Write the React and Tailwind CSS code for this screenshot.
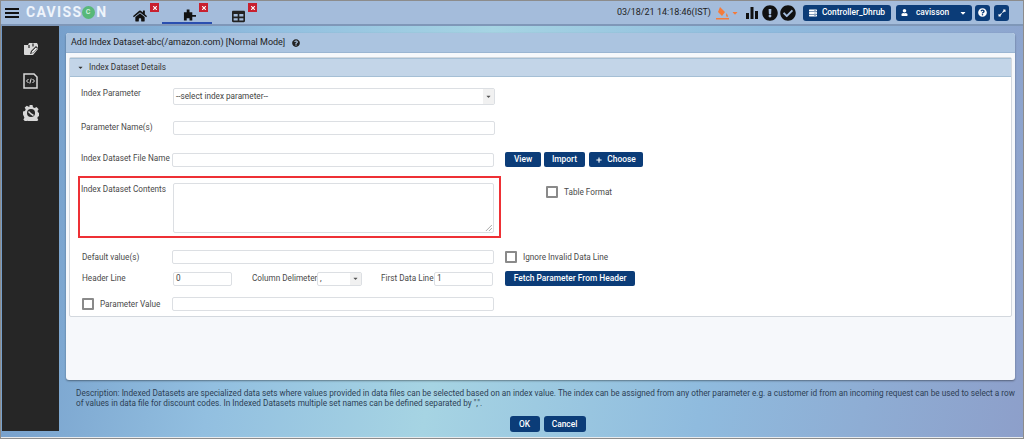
import React from "react";
import { FaHome, FaTable, FaQuestionCircle, FaExpandAlt, FaUser, FaServer, FaExclamationCircle, FaCheckCircle, FaCaretDown, FaPlus, FaTimes } from "react-icons/fa";

function Close({ className }) {
  return (
    <span className={"absolute w-[9px] h-[9px] bg-[#c8202f] flex items-center justify-center " + className}>
      <FaTimes className="text-white text-[6px]" />
    </span>
  );
}

function NavBtn({ children, className = "" }) {
  return (
    <button className={"h-[15px] rounded-[2px] bg-[#0b3c78] text-white text-[8.4px] font-medium flex items-center justify-center whitespace-nowrap " + className}>
      {children}
    </button>
  );
}

function Field({ className = "", children }) {
  return (
    <div className={"h-[14px] bg-white border border-[#dcdfe3] rounded-[2px] text-[8.2px] text-[#444] flex items-center px-[2px] " + className}>
      {children}
    </div>
  );
}

function Check({ className = "" }) {
  return <span className={"block w-[12px] h-[12px] border-2 border-[#8a8a8a] rounded-[1px] bg-white " + className} />;
}

function Label({ children, className = "" }) {
  return <span className={"text-[8.2px] text-[#4a4a4a] whitespace-nowrap " + className}>{children}</span>;
}

function Caret() {
  return (
    <span className="w-[11px] self-stretch bg-[#f1f1f1] flex items-center justify-center ml-auto -mr-[2px]">
      <FaCaretDown className="text-[#555] text-[7px]" />
    </span>
  );
}

export default function App() {
  return (
    <div className="w-[1024px] h-[439px] overflow-hidden flex flex-col bg-[#e8eaec] border-t border-x border-b border-[#8c8c8c] font-['Roboto',sans-serif] pb-[1px]">
      <header className="h-[25px] shrink-0 flex items-center bg-[#a4bcdb] border-b-2 border-[#7f97b8]">
        <div className="w-[14px] ml-[4px] flex flex-col gap-[2px]">
          <span className="h-[2px] bg-[#111]" />
          <span className="h-[2px] bg-[#111]" />
          <span className="h-[2px] bg-[#111]" />
        </div>
        <span className="ml-[7px] w-[84px] text-[14px] font-bold tracking-[1.3px] text-[#eef4fb] flex items-center">
          CAVISS
          <span className="w-[13px] h-[13px] rounded-full bg-[#58b878] flex items-center justify-center text-[7px] text-[#cfeedd]">C</span>
          <span className="ml-[1px]">N</span>
        </span>
        <div className="relative w-[50px] h-full ml-[2px] flex items-center pl-[21px]">
          <FaHome className="text-[#111] text-[14px] mt-[7px]" />
          <Close className="top-[2px] left-[38px]" />
        </div>
        <div className="relative w-[50px] h-full flex items-center justify-center border-b-2 border-[#2a4fb0] pl-[4px]">
          <svg viewBox="0 0 14 12" className="w-[13px] h-[12px] mt-[6px]" fill="#111">
            <path d="M4 0h3v3H4zM1 3h9v3h4v2h-4v4H7V9.500H4V12H1z" />
          </svg>
          <Close className="top-[2px] left-[37px]" />
        </div>
        <div className="relative w-[50px] h-full flex items-center justify-center pl-[3px]">
          <FaTable className="text-[#222] text-[13px] mt-[7px]" />
          <Close className="top-[2px] left-[36px]" />
        </div>
        <div className="ml-auto flex items-center">
          <span className="text-[9px] text-[#222] whitespace-nowrap">03/18/21 14:18:46(IST)</span>
          <svg viewBox="0 0 14 14" className="w-[14px] h-[14px] ml-[5px]">
            <path d="M4 1l5 5-3 4-4-4zM10.500 7c1 2 2 3 1 4-1 0-2-1-1-4z" fill="#f47b3a" />
            <path d="M0 12h13v1.500H0z" fill="#f47b3a" />
          </svg>
          <FaCaretDown className="text-[#f47b3a] text-[8px] ml-[1px]" />
          <svg viewBox="0 0 12 12" className="w-[12px] h-[12px] ml-[7px]" fill="#111">
            <path d="M0 6h3v6H0zM4.500 0h3v12h-3zM9 4h3v8H9z" />
          </svg>
          <FaExclamationCircle className="text-[#111] text-[16px] ml-[4px]" />
          <FaCheckCircle className="text-[#111] text-[16px] ml-[2px]" />
          <NavBtn className="w-[88px] h-[16px] ml-[7px] gap-[5px] rounded-[3px]">
            <FaServer className="text-[8px]" />
            Controller_Dhrub
          </NavBtn>
          <NavBtn className="w-[76px] h-[16px] ml-[5px] rounded-[3px] justify-start px-[5px]">
            <FaUser className="text-[7px]" />
            <span className="ml-[8px]">cavisson</span>
            <FaCaretDown className="text-[8px] ml-auto" />
          </NavBtn>
          <NavBtn className="w-[15px] h-[16px] ml-[3px] rounded-[3px]"><FaQuestionCircle className="text-[9px]" /></NavBtn>
          <NavBtn className="w-[15px] h-[16px] ml-[4px] mr-[14px] rounded-[3px]"><FaExpandAlt className="text-[8px]" /></NavBtn>
        </div>
      </header>
      <div className="flex-1 min-h-0 flex bg-[linear-gradient(100deg,#6f97c6_0%,#92bfe0_25%,#a6d4e3_45%,#8fbbde_70%,#8d9fca_100%)]">
        <aside className="w-[57px] h-[405px] ml-[1px] shrink-0 bg-[#262626] flex flex-col items-center pt-[16px] gap-[16px]">
          <svg viewBox="0 0 16 15" className="w-[16px] h-[15px]">
            <path d="M1 3h4l1-2h8l1 2v4l-5 6H2a1 1 0 0 1-1-1z" fill="#d8d8d8" />
            <path d="M6 3v3M10 1.500v3" stroke="#262626" strokeWidth="1.200" />
            <path d="M7 12l1-3 5-5 2 2-5 5z" fill="#262626" />
            <path d="M8.500 11l.5-1.500 4-4 1 1-4 4z" fill="#fff" />
          </svg>
          <svg viewBox="0 0 15 16" className="w-[15px] h-[16px]">
            <path d="M1 1h10l3 3v11H1z" fill="#262626" stroke="#d8d8d8" strokeWidth="1.500" />
            <path d="M5.500 6L3.500 8l2 2M9.500 6l2 2-2 2M8.200 5.500L6.800 10.500" fill="none" stroke="#e8e8e8" strokeWidth="1" />
          </svg>
          <svg viewBox="0 0 16 16" className="w-[16px] h-[16px]">
            <path d="M6.500 0h3l.5 2.200 1.500.7L13.600 2l2 2.200-1.100 1.800.6 1.500 1.900.5v3l-2 .5-.7 1.500 1 1.900-2.100 2-1.900-1-1.500.6-.5 1.500h-3l-.5-1.700-1.500-.6-1.900 1-2-2.100 1-1.800-.6-1.500L0 9.500v-3l2-.6.700-1.500L1.700 2.600 3.800.7l1.900 1.100 1-.4z" fill="#d8d8d8" />
            <circle cx="8" cy="8" r="4" fill="#262626" />
            <path d="M5.500 6.500l2.500 2.500 2.500 1.500" fill="none" stroke="#d8d8d8" strokeWidth="1.500" />
          </svg>
        </aside>
        <main className="flex-1 min-w-0 pl-[7px] pr-[8px] pt-[7px] flex flex-col">
          <section className="h-[347px] shrink-0 rounded-[3px] bg-[#f6f8fb] shadow-[0_1px_2px_rgba(0,0,0,0.4)] flex flex-col">
            <div className="h-[20px] rounded-t-[3px] bg-[#abc4e0] border-b border-[#9ab5d2] flex items-center pl-[5px] text-[9px] text-[#222]">
              Add Index Dataset-abc(/amazon.com) [Normal Mode]
              <FaQuestionCircle className="text-[8px] ml-[7px] text-[#222]" />
            </div>
            <div className="mx-[3px] mt-[4px] h-[260px] bg-white border border-[#d3d8de] rounded-[2px] flex flex-col">
              <div className="h-[19px] shrink-0 bg-[#c3d5e8] border-y border-[#a5bfd5] flex items-center pl-[7px] text-[8.2px] text-[#333]">
                <FaCaretDown className="text-[7px] mr-[5px]" />
                Index Dataset Details
              </div>
              <div className="flex flex-col pl-[11px] pt-[11px]">
                <div className="flex h-[18px]">
                  <Label className="w-[91px] leading-[10px]">Index Parameter</Label>
                  <Field className="w-[322px] h-[17px] ml-[1px]">
                    --select index parameter--
                    <Caret />
                  </Field>
                </div>
                <div className="flex items-center h-[14px] mt-[15px]">
                  <Label className="w-[92px] pb-[2px]">Parameter Name(s)</Label>
                  <Field className="w-[322px]" />
                </div>
                <div className="flex items-center h-[15px] mt-[17px]">
                  <Label className="w-[91px] pb-[3px]">Index Dataset File Name</Label>
                  <Field className="w-[322px]" />
                  <NavBtn className="w-[36px] ml-[11px]">View</NavBtn>
                  <NavBtn className="w-[41px] ml-[3px]">Import</NavBtn>
                  <NavBtn className="w-[54px] ml-[4px] gap-[5px]"><FaPlus className="text-[6px]" />Choose</NavBtn>
                </div>
                <div className="flex items-start mt-[9px] h-[62px]">
                  <div className="relative w-[423px] h-[62px] -ml-[3px] border-2 border-[#ee3035] flex pl-[1px] pt-[5px]">
                    <Label className="w-[92px] leading-[13px]">Index Dataset Contents</Label>
                    <div className="relative w-[321px] h-[50px] bg-white border border-[#dcdfe3] rounded-[2px]">
                      <svg viewBox="0 0 8 8" className="absolute right-[1px] bottom-[1px] w-[7px] h-[7px]" stroke="#888" strokeWidth="0.8">
                        <path d="M1 8L8 1M4.500 8L8 4.500" />
                      </svg>
                    </div>
                  </div>
                  <Check className="ml-[45px] mt-[10px]" />
                  <Label className="ml-[6px] mt-[10px]">Table Format</Label>
                </div>
                <div className="flex items-center h-[14px] mt-[12px]">
                  <Label className="w-[91px] pl-[1px]">Default value(s)</Label>
                  <Field className="w-[322px]" />
                  <Check className="ml-[11px]" />
                  <Label className="ml-[6px]">Ignore Invalid Data Line</Label>
                </div>
                <div className="flex items-center h-[15px] mt-[7px]">
                  <Label className="w-[92px] pl-[1px]">Header Line</Label>
                  <Field className="w-[59px]">0</Field>
                  <Label className="w-[65px] ml-[20px]">Column Delimeter</Label>
                  <Field className="w-[45px]">,<Caret /></Field>
                  <Label className="w-[53px] ml-[19px]">First Data Line</Label>
                  <Field className="w-[59px]">1</Field>
                  <NavBtn className="w-[130px] ml-[12px]">Fetch Parameter From Header</NavBtn>
                </div>
                <div className="flex items-center h-[14px] mt-[11px]">
                  <Check className="ml-[1px]" />
                  <Label className="ml-[6px] w-[72px]">Parameter Value</Label>
                  <Field className="w-[322px]" />
                </div>
              </div>
            </div>
          </section>
          <p className="mt-[8px] pl-[10px] text-[8.22px] leading-[10px] text-[#2d3f55]">
            Description: Indexed Datasets are specialized data sets where values provided in data files can be selected based on an index value. The index can be assigned from any other parameter e.g. a customer id from an incoming request can be used to select a row of values in data file for discount codes. In Indexed Datasets multiple set names can be defined separated by ",".
          </p>
          <div className="mt-[8px] flex justify-center gap-[4px] pl-[14px]">
            <NavBtn className="w-[30px] h-[16px] rounded-[3px]">OK</NavBtn>
            <NavBtn className="w-[42px] h-[16px] rounded-[3px]">Cancel</NavBtn>
          </div>
        </main>
      </div>
    </div>
  );
}
